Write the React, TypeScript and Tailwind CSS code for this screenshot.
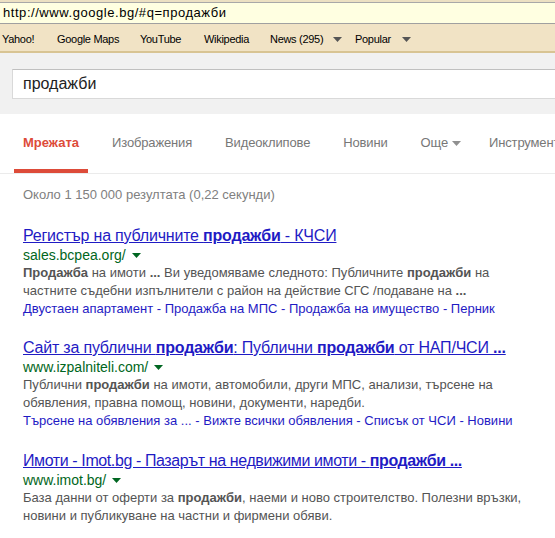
import React from "react";

const BLUE = "text-[#1f1bc4]";

function Caret({ color }: { color: string }) {
  return (
    <svg width="9" height="5" viewBox="0 0 9 5" className="inline-block">
      <path d="M0 0h9L4.5 5z" fill={color} />
    </svg>
  );
}

function Url({ href }: { href: string }) {
  return (
    <div className="flex items-center gap-[6px] h-[18px] text-[14px] text-[#006621]">
      <span>{href}</span>
      <Caret color="#006621" />
    </div>
  );
}

function Sitelinks({ items }: { items: string[] }) {
  return (
    <div className={`h-[18px] leading-[18px] text-[13px] ${BLUE}`}>
      {items.map((s, i) => (
        <span key={i}>
          {i > 0 && <span> - </span>}
          {s}
        </span>
      ))}
    </div>
  );
}

export default function App() {
  const tabs = ["Изображения", "Видеоклипове", "Новини"];
  const bookmarks = [
    { label: "Yahoo!", w: "w-[55px]" },
    { label: "Google Maps", w: "w-[83px]" },
    { label: "YouTube", w: "w-[64px]" },
    { label: "Wikipedia", w: "w-[66px]" },
  ];

  return (
    <div className="w-[555px] h-[538px] overflow-hidden bg-white font-['Liberation_Sans',Arial,sans-serif]">
      {/* browser chrome */}
      <div className="h-[3px] bg-[#ece0c2] border-b border-[#a8a8a8]" />
      <div className="h-[21px] bg-[#ffffe1] border-b border-[#a0a0a0] pl-[3px] flex items-center text-[13px] tracking-[0.55px] text-black">
        http://www.google.bg/#q=продажби
      </div>
      <div className="h-[29px] bg-[#f1e3c5] border-b-2 border-[#d8c493] pl-[2px] pt-[3px] flex items-center text-[11px] tracking-[-0.3px] text-black">
        {bookmarks.map((b) => (
          <span key={b.label} className={b.w}>
            {b.label}
          </span>
        ))}
        <span className="w-[63px]">News (295)</span>
        <span className="w-[22px] flex"><Caret color="#555" /></span>
        <span className="w-[47px]">Popular</span>
        <span className="flex"><Caret color="#555" /></span>
      </div>

      {/* search header */}
      <div className="h-[61px] bg-[#f1f1f1] pt-[16px] pl-[12px]">
        <div className="w-[600px] h-[30px] bg-white border border-[#d9d9d9] border-t-[#c0c0c0] flex items-center pl-[10px] text-[16px] text-[#222]">
          продажби
        </div>
      </div>

      {/* tabs */}
      <div className="h-[60px] border-b border-[#ebebeb] flex pl-[14px] text-[13px] tracking-[-0.15px] text-[#777] whitespace-nowrap">
        <div className="h-[59px] px-[9px] pt-[3px] border-b-[4px] border-[#dd4b39] flex items-center font-bold tracking-normal text-[#dd4b39]">
          Мрежата
        </div>
        {tabs.map((t) => (
          <div key={t} className="ml-[15px] px-[9px] h-[59px] flex items-center pb-[1px]">
            {t}
          </div>
        ))}
        <div className="ml-[15px] px-[9px] h-[59px] flex items-center gap-[4px] pb-[1px]">
          Още <Caret color="#909090" />
        </div>
        <div className="ml-[10px] px-[9px] h-[59px] flex items-center pb-[1px]">
          Инструменти
        </div>
      </div>

      {/* results */}
      <div className="pl-[23px] pt-[12px]">
        <div className="h-[18px] leading-[18px] text-[13px] text-[#808080]">
          Около 1 150 000 резултата (0,22 секунди)
        </div>

        <div className="mt-[22px] text-[13px] text-[#545454]">
          <div className={`h-[20px] leading-[20px] text-[16px] tracking-[-0.2px] underline ${BLUE}`}>
            Регистър на публичните <b>продажби</b> - КЧСИ
          </div>
          <Url href="sales.bcpea.org/" />
          <div className="leading-[18px]">
            <b>Продажба</b> на имоти <b>...</b> Ви уведомяваме следното: Публичните <b>продажби</b> на
            <br />
            частните съдебни изпълнители с район на действие СГС /подаване на <b>...</b>
          </div>
          <Sitelinks items={["Двустаен апартамент", "Продажба на МПС", "Продажба на имущество", "Перник"]} />
        </div>

        <div className="mt-[20px] text-[13px] text-[#545454]">
          <div className={`h-[20px] leading-[20px] text-[16px] tracking-[-0.2px] underline ${BLUE}`}>
            Сайт за публични <b>продажби</b>: Публични <b>продажби</b> от НАП/ЧСИ <b>...</b>
          </div>
          <Url href="www.izpalniteli.com/" />
          <div className="leading-[18px]">
            Публични <b>продажби</b> на имоти, автомобили, други МПС, анализи, търсене на
            <br />
            обявления, правна помощ, новини, документи, наредби.
          </div>
          <Sitelinks items={["Търсене на обявления за ...", "Вижте всички обявления", "Списък от ЧСИ", "Новини"]} />
        </div>

        <div className="mt-[21px] text-[13px] text-[#545454]">
          <div className={`h-[20px] leading-[20px] text-[16px] tracking-[-0.4px] underline ${BLUE}`}>
            Имоти - Imot.bg - Пазарът на недвижими имоти - <b>продажби ...</b>
          </div>
          <Url href="www.imot.bg/" />
          <div className="leading-[18px]">
            База данни от оферти за <b>продажби</b>, наеми и ново строителство. Полезни връзки,
            <br />
            новини и публикуване на частни и фирмени обяви.
          </div>
        </div>
      </div>
    </div>
  );
}
